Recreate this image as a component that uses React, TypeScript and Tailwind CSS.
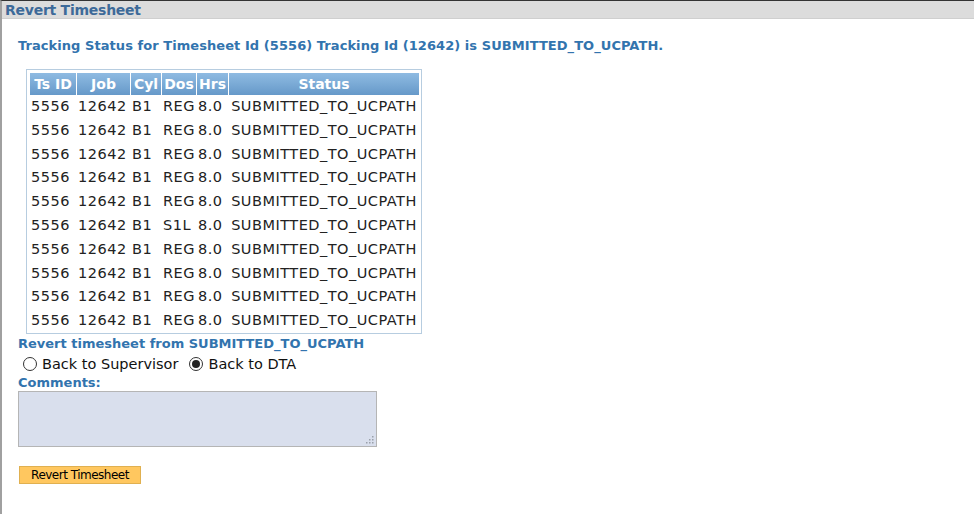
import React from "react";

const rows = [
  ["5556", "12642", "B1", "REG", "8.0", "SUBMITTED_TO_UCPATH"],
  ["5556", "12642", "B1", "REG", "8.0", "SUBMITTED_TO_UCPATH"],
  ["5556", "12642", "B1", "REG", "8.0", "SUBMITTED_TO_UCPATH"],
  ["5556", "12642", "B1", "REG", "8.0", "SUBMITTED_TO_UCPATH"],
  ["5556", "12642", "B1", "REG", "8.0", "SUBMITTED_TO_UCPATH"],
  ["5556", "12642", "B1", "S1L", "8.0", "SUBMITTED_TO_UCPATH"],
  ["5556", "12642", "B1", "REG", "8.0", "SUBMITTED_TO_UCPATH"],
  ["5556", "12642", "B1", "REG", "8.0", "SUBMITTED_TO_UCPATH"],
  ["5556", "12642", "B1", "REG", "8.0", "SUBMITTED_TO_UCPATH"],
  ["5556", "12642", "B1", "REG", "8.0", "SUBMITTED_TO_UCPATH"],
];

const heads = ["Ts ID", "Job", "Cyl", "Dos", "Hrs", "Status"];

export default function App() {
  return (
    <div className="w-[974px] h-[514px] bg-white overflow-hidden border-l-2 border-l-[#a0a0a0] border-t border-t-[#333] font-['DejaVu_Sans',sans-serif]">
      <div className="h-[18px] bg-[#dcdcdc] border-b border-[#cfcfcf] pl-[3px] text-[14px] leading-[18px] font-bold text-[#3d6a99] tracking-[-0.25px]">
        Revert Timesheet
      </div>
      <div className="flex flex-col items-start pl-[16px]">
        <div className="mt-[19px] text-[13px] leading-[16px] font-bold text-[#3274ae] tracking-[0.06px]">
          Tracking Status for Timesheet Id (5556) Tracking Id (12642) is SUBMITTED_TO_UCPATH.
        </div>
        <div className="ml-[8px] mt-[15px] w-[396px] border border-[#b7cde0] pt-[3px] pl-[3px] pr-[2px] pb-0">
          <div className="grid grid-cols-[46px_53px_30px_34px_31px_190px] gap-x-[1px] text-[14.5px] text-[#222]">
            {heads.map((h, i) => (
              <div key={i} className="h-[22px] text-center text-[14px] font-bold text-white leading-[22px] bg-gradient-to-b from-[#8fbbe2] to-[#6699c9] whitespace-nowrap overflow-hidden">
                {h}
              </div>
            ))}
            {rows.map((r, i) =>
              r.map((c, j) => (
                <div key={`${i}-${j}`} className={`h-[23.8px] leading-[23.8px] whitespace-nowrap tracking-[0.5px] ${j === 5 ? "text-center" : "pl-[1px] text-left"}`}>
                  {c}
                </div>
              ))
            )}
          </div>
        </div>
        <div className="mt-[1px] text-[13px] leading-[18px] font-bold text-[#3274ae]">
          Revert timesheet from SUBMITTED_TO_UCPATH
        </div>
        <div className="flex items-center h-[23px] text-[14.5px] text-[#111]">
          <span className="ml-[5px] w-[14px] h-[14px] rounded-full border border-[#333] bg-white" />
          <span className="ml-[5px]">Back to Supervisor</span>
          <span className="ml-[11px] w-[14px] h-[14px] rounded-full border border-[#333] bg-white flex items-center justify-center">
            <span className="w-[8px] h-[8px] rounded-full bg-[#222]" />
          </span>
          <span className="ml-[5px]">Back to DTA</span>
        </div>
        <div className="text-[13px] leading-[14px] font-bold text-[#3274ae]">
          Comments:
        </div>
        <div className="relative mt-[1px] w-[359px] h-[56px] bg-[#d9dfed] border border-[#b5b5b5]">
          <svg className="absolute right-[2px] bottom-[2px]" width="9" height="9" viewBox="0 0 9 9">
            <g fill="#9aa0aa">
              <rect x="7" y="1" width="1.5" height="1.5" />
              <rect x="4" y="4" width="1.5" height="1.5" />
              <rect x="7" y="4" width="1.5" height="1.5" />
              <rect x="1" y="7" width="1.5" height="1.5" />
              <rect x="4" y="7" width="1.5" height="1.5" />
              <rect x="7" y="7" width="1.5" height="1.5" />
            </g>
          </svg>
        </div>
        <button className="mt-[19px] ml-[1px] w-[122px] h-[18px] bg-[#ffc75f] border border-[#e0b050] text-[12px] leading-[16px] text-black text-center tracking-[-0.5px]">
          Revert Timesheet
        </button>
      </div>
    </div>
  );
}
